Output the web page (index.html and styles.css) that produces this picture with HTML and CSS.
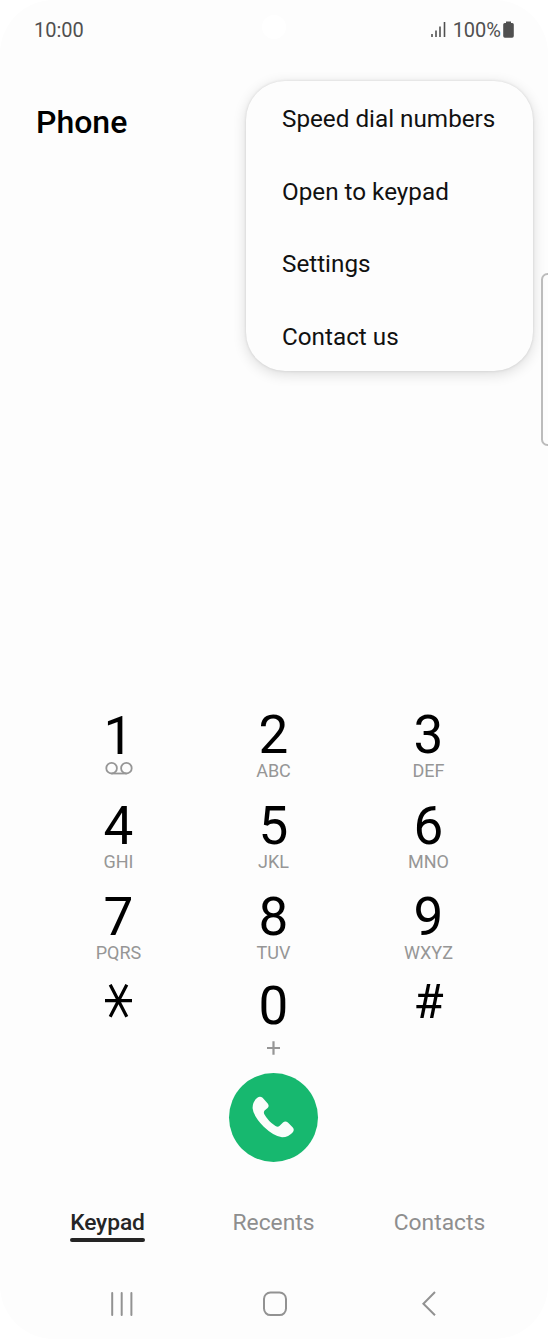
FILE: index.html
```html
<!DOCTYPE html>
<html lang="en">
<head>
  <meta charset="UTF-8" />
  <meta name="viewport" content="width=device-width, initial-scale=1.0"/>
  <title>Phone</title>
  <link rel="stylesheet" href="styles.css">
</head>
<body>

  <div class="phone">
    <header class="status-bar">
      <span class="time">10:00</span>
      <span class="camera"></span>
      <div class="status-right">
        <svg class="signal" width="15" height="15" viewBox="0 0 15 15">
          <path d="M1 12v3M5 8.5v6.5M9 4.5v10.5M13.5 0v15" stroke="#505050" stroke-width="1.6" />
        </svg>
        <span class="percent">100%</span>
        <svg class="battery" width="11" height="17" viewBox="0 0 11 17">
          <path d="M3 0.5h5v1.5h1.3a1.5 1.5 0 0 1 1.5 1.5v11.5a1.7 1.7 0 0 1-1.7 1.7H1.9a1.7 1.7 0 0 1-1.7-1.7V3.5A1.5 1.5 0 0 1 1.7 2H3z" fill="#505050" />
        </svg>
      </div>
    </header>

    <h1>Phone</h1>

    <ul class="menu">
      <li>Speed dial numbers</li>
      <li>Open to keypad</li>
      <li>Settings</li>
      <li>Contact us</li>
    </ul>

    <div class="edge-handle"></div>

    <main class="keypad">
      <button class="key key-one">
        <span class="digit">1</span>
        <svg width="28" height="14" viewBox="0 0 28 14" fill="none" stroke="#969696" stroke-width="1.8">
          <circle cx="6.6" cy="6.2" r="5.3" />
          <circle cx="21.4" cy="6.2" r="5.3" />
          <path d="M6.6 11.5h14.8" />
        </svg>
      </button>
      <button class="key"><span class="digit">2</span><span class="letters">ABC</span></button>
      <button class="key"><span class="digit">3</span><span class="letters">DEF</span></button>
      <button class="key"><span class="digit">4</span><span class="letters">GHI</span></button>
      <button class="key"><span class="digit">5</span><span class="letters">JKL</span></button>
      <button class="key"><span class="digit">6</span><span class="letters">MNO</span></button>
      <button class="key"><span class="digit">7</span><span class="letters">PQRS</span></button>
      <button class="key"><span class="digit">8</span><span class="letters">TUV</span></button>
      <button class="key"><span class="digit">9</span><span class="letters">WXYZ</span></button>
      <button class="key key-star" aria-label="star">
        <svg width="27" height="34" viewBox="0 0 27 34" stroke="#000" stroke-width="3.2">
          <path d="M0 16.7h27M5.2 0.7l16.6 32M21.8 0.7L5.2 32.7" />
        </svg>
      </button>
      <button class="key key-zero">
        <span class="digit">0</span>
        <svg width="13" height="14" viewBox="0 0 13 14" stroke="#969696" stroke-width="2.2">
          <path d="M0 7h13M6.5 0.2v13.6" />
        </svg>
      </button>
      <button class="key key-hash"><span class="digit">#</span></button>
    </main>

    <button class="call" aria-label="Call">
      <svg width="89" height="89" viewBox="0 0 89 89">
        <path d="M28.3 24.7Q31 22.6 33.6 24.7L38.7 30.4Q40.6 33 38.6 35L35.6 37.6Q34.4 39 35.2 40.9Q39 48 46.5 53Q48.8 54.4 50.4 53L54 49.4Q56.4 47.7 58.9 49.5L63.6 54.2Q65.8 56.7 63.8 59.2Q59.5 64.3 53 64.2Q45 63.7 34.5 53.6Q24 42.5 23.6 35.2Q23.4 28.7 28.3 24.7Z" fill="#fafdfb" />
      </svg>
    </button>

    <nav class="tabs">
      <a class="active">Keypad</a>
      <a>Recents</a>
      <a>Contacts</a>
    </nav>

    <footer class="nav-bar">
      <svg width="24" height="26" viewBox="0 0 24 26" fill="none" stroke="#929292" stroke-width="2" stroke-linecap="round">
        <path d="M2.2 2v22M11.7 2v22M21.4 2v22" />
      </svg>
      <svg class="home" width="26" height="26" viewBox="0 0 26 26" fill="none" stroke="#929292" stroke-width="2">
        <rect x="2" y="1.5" width="22" height="22.6" rx="6.5" />
      </svg>
      <svg width="16" height="26" viewBox="0 0 16 26" fill="none" stroke="#929292" stroke-width="2">
        <path d="M14 1L2.4 12.7l11.6 11.6" />
      </svg>
    </footer>
  </div>

</body>
</html>
```

FILE: styles.css
```css
* {
  box-sizing: border-box;
}

body {
  margin: 0;
  background: #fff;
  font-family: Roboto, "Liberation Sans", sans-serif;
}

.phone {
  position: relative;
  display: flex;
  flex-direction: column;
  width: 548px;
  height: 1339px;
  background: #fdfdfd;
  border-radius: 54px;
  overflow: hidden;
}

.status-bar {
  display: grid;
  grid-template-columns: 1fr 24px 1fr;
  align-items: center;
  height: 59px;
  padding: 0 34px;
  color: #505050;
  font-size: 20px;
}

.camera {
  width: 24px;
  height: 24px;
  margin-top: -6px;
  border-radius: 50%;
  background: #fff;
}

.status-right {
  display: flex;
  justify-content: flex-end;
  align-items: center;
}

.signal {
  margin-right: 7px;
}

.battery {
  margin-left: 2px;
}

h1 {
  margin: 43px 0 0 36px;
  font-size: 32px;
  font-weight: 500;
  line-height: 40px;
  color: #000;
}

.menu {
  position: absolute;
  top: 81px;
  right: 15px;
  width: 287px;
  height: 290px;
  margin: 0;
  padding: 1px 0 0 36px;
  list-style: none;
  background: #fdfdfd;
  border-radius: 39px;
  box-shadow: 0 3px 14px rgba(0,0,0,0.14), 0 0 3px rgba(0,0,0,0.12);
}

.menu li {
  height: 72.5px;
  line-height: 74px;
  font-size: 24.25px;
  color: #111;
}

.edge-handle {
  position: absolute;
  top: 273px;
  right: -6px;
  width: 13px;
  height: 173px;
  border: 2px solid #bcbcbc;
  border-radius: 7px;
}

.keypad {
  display: grid;
  grid-template-columns: repeat(3, 155px);
  grid-template-rows: 91px 91px 89px 93px;
  margin: 567px 0 0 41px;
}

button {
  padding: 0;
  border: none;
  background: none;
  font-family: inherit;
}

.key {
  display: flex;
  flex-direction: column;
  align-items: center;
}

.digit {
  font-size: 53px;
  line-height: 52px;
  color: #000;
}

.letters {
  font-size: 18px;
  line-height: 19px;
  color: #969696;
}

.key-one .digit {
  padding-top: 1px;
}

.key-star svg {
  margin-top: 4px;
}

.key-zero svg {
  margin-top: 9px;
}

.key-hash .digit {
  font-size: 49px;
  line-height: 43px;
}

.call {
  width: 89px;
  height: 89px;
  margin-left: 229px;
  border-radius: 50%;
  background: #17b86f;
}

.call svg {
  display: block;
}

.tabs {
  display: grid;
  grid-template-columns: repeat(3, 166px);
  justify-content: center;
  justify-items: center;
  margin: 46px 1px 0 0;
  font-size: 22.8px;
  line-height: 30px;
  color: #8e8e8e;
}

.tabs .active {
  height: 34px;
  font-weight: 500;
  letter-spacing: -0.1px;
  color: #252525;
}

.tabs .active::after {
  content: "";
  display: block;
  height: 4px;
  border-radius: 2px;
  background: #252525;
}

.nav-bar {
  display: flex;
  justify-content: space-between;
  margin-top: 49px;
  padding: 0 111px 0 110px;
}

.home {
  margin-right: 6px;
}
```
